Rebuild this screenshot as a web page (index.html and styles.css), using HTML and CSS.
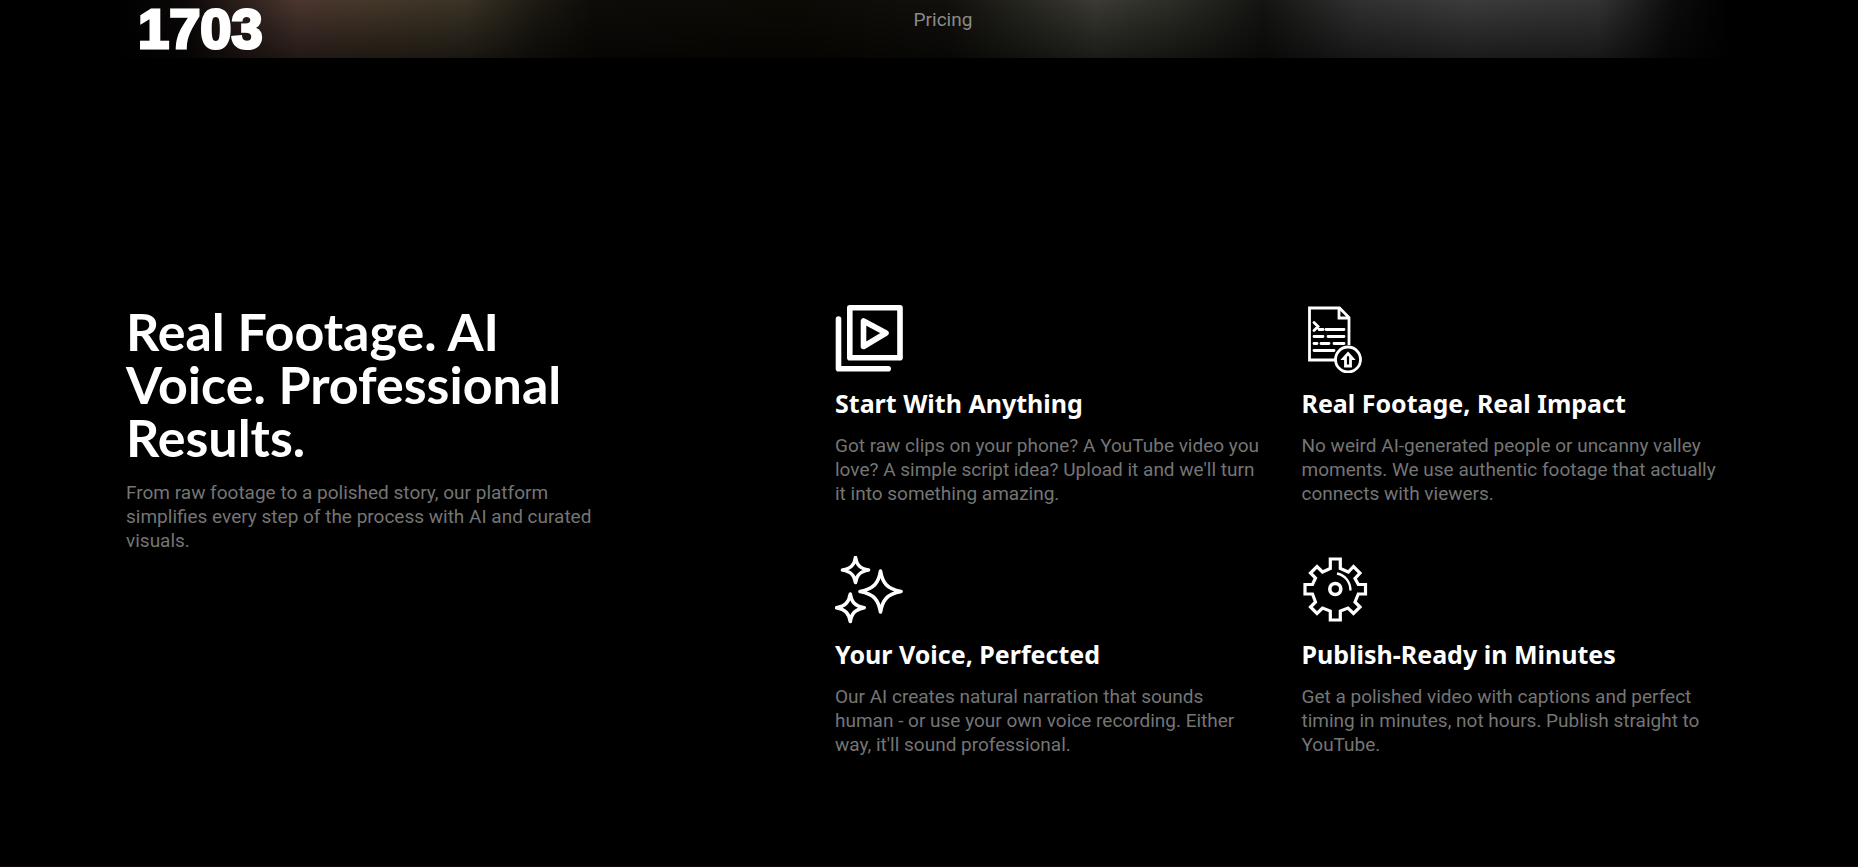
FILE: index.html
```html
<!DOCTYPE html>
<html lang="en">
<head>
<meta charset="utf-8">
<meta name="viewport" content="width=device-width, initial-scale=1">
<title>Real Footage. AI Voice. Professional Results.</title>
<link rel="stylesheet" href="styles.css">
</head>
<body>
<section class="hero">
  <div class="hero-glow"></div>
  <div class="hero-inner">
    <p class="count">1703</p>
    <a class="hero-link" href="#pricing">Pricing</a>
  </div>
</section>
<main class="features">
  <div class="intro">
    <h2 class="intro-title">Real Footage. AI<br>Voice. Professional<br>Results.</h2>
    <p class="copy">From raw footage to a polished story, our platform<br>simplifies every step of the process with AI and curated<br>visuals.</p>
  </div>
  <div class="grid">
    <article class="card">
      <svg class="icon" viewBox="0 0 68 68" fill="none" stroke="#fff" stroke-width="5.6" stroke-linejoin="round" stroke-linecap="round" aria-hidden="true">
        <path d="M14.8 2.8H65V52.700H14.8Z"/><path d="M3.500 14V63.700H53.200"/><path d="M28.500 16V41.500L51 28Z"/>
      </svg>
      <h3 class="card-title">Start With Anything</h3>
      <p class="copy">Got raw clips on your phone? A YouTube video you<br>love? A simple script idea? Upload it and we'll turn<br>it into something amazing.</p>
    </article>
    <article class="card">
      <svg class="icon" viewBox="0 0 68 68" fill="none" stroke="#fff" stroke-width="2.8" aria-hidden="true">
        <path d="M33 55H7.500V3H37.500L47 12.500V40M37 3V13H47"/>
        <path d="M12 17.500L16 21.500L12 25.500M17 24.500H21M24 24.500H42M12 31.500H21M26 31.500H42M12 38.500H15M19 38.500H27M32 38.500H42M12 45.500H32" stroke-linecap="round"/>
        <circle cx="46" cy="54.500" r="12.500"/>
        <path d="M46 48.500L50.500 53.500H48.500V61H43.500V53.500H41.500Z"/>
      </svg>
      <h3 class="card-title">Real Footage, Real Impact</h3>
      <p class="copy">No weird AI-generated people or uncanny valley<br>moments. We use authentic footage that actually<br>connects with viewers.</p>
    </article>
    <article class="card">
      <svg class="icon" viewBox="0 0 68 68" fill="none" stroke="#fff" stroke-width="3.600" stroke-linejoin="round" aria-hidden="true">
        <path d="M45.500 15C47.500 27 52 33 66 35.500C52 38 47.500 44 45.500 56C43.500 44 39 38 25 35.500C39 33 43.500 27 45.500 15Z"/>
        <path d="M20.500 1.500C21.500 9 25 12.500 33.500 14C25 15.500 21.500 19 20.500 26.500C19.500 19 16 15.500 7.500 14C16 12.500 19.500 9 20.500 1.500Z"/>
        <path d="M15.300 38C16.500 46 20 50 29.200 51.700C20 53.500 16.500 57.500 15.300 65.500C14 57.500 10.500 53.500 1.500 51.700C10.500 50 14 46 15.300 38Z"/>
      </svg>
      <h3 class="card-title">Your Voice, Perfected</h3>
      <p class="copy">Our AI creates natural narration that sounds<br>human - or use your own voice recording. Either<br>way, it'll sound professional.</p>
    </article>
    <article class="card">
      <svg class="icon" viewBox="0 0 68 68" fill="none" stroke="#fff" stroke-width="3.200" aria-hidden="true">
        <path d="M28.300 3H38.300V12.500L46.300 16L51.500 10.500L58 17L53 22.500L56.300 28.500H63.500V38H56.300L53 46L58 51L51.500 57.500L46 52L38.300 55V64H28.300V55L20.500 52L15 57.500L8.500 51L13.500 46L10.500 38H3V28.500H10.500L13.500 22L8.500 17L15 10.500L20.500 16L28.300 12.500Z"/>
        <circle cx="33.300" cy="33" r="5.500" stroke-width="3.600"/>
        <path d="M35 17.500C43 19 48.500 26 48.500 34.500" stroke-width="2.400"/>
      </svg>
      <h3 class="card-title">Publish-Ready in Minutes</h3>
      <p class="copy">Get a polished video with captions and perfect<br>timing in minutes, not hours. Publish straight to<br>YouTube.</p>
    </article>
  </div>
</main>
</body>
</html>
```
FILE: styles.css
```css
* { box-sizing: border-box; }
body { display: flex; flex-direction: column; min-height: 100vh; margin: 0; background: #000; color: #fff; font-family: Roboto, "Noto Sans", sans-serif; }
h2, h3, p { margin: 0; }
.hero { position: relative; overflow: hidden; }
.hero-glow {
  position: absolute; inset: 0;
  background:
    linear-gradient(to bottom, transparent, rgba(0, 0, 0, 0.55)),
    linear-gradient(to right, #000 6%, #0b0807 10%, #2c201c 13%, #4b362f 16%, #443729 20%, #3a3326 25%, #1c1912 29%, #0e0c08 32%, #0d0a05 43%, #11100c 51%, #3b3b33 59%, #2c2d26 63%, #141412 68%, #303030 73%, #3b3b3b 79%, #333 86%, #0c0c0c 90%, #000 93%);
}
.hero-inner { position: relative; display: grid; grid-template-columns: 1fr auto 1fr; padding: 0 110px 0 138px; }
.count { font: bold 56px/58px "Liberation Sans", sans-serif; -webkit-text-stroke: 3px #fff; }
.hero-link { color: #8a8a88; font-size: 19px; line-height: 40px; text-decoration: none; }
.features { flex: 1; display: grid; grid-template-columns: 709px 1fr; align-items: start; padding: 247px 126px 80px; border-bottom: 1px solid #100808; }
.intro-title { margin-bottom: 17px; font: 700 52px/53px Lato, sans-serif; }
.copy { color: #757575; font-size: 19px; line-height: 24px; white-space: nowrap; }
.grid { display: grid; grid-template-columns: 1fr 1fr; gap: 50px 36px; }
.icon { display: block; width: 68px; height: 68px; }
.card-title { margin: 14px 0 15px; font: 700 25px/32px "Noto Sans", sans-serif; }
```
